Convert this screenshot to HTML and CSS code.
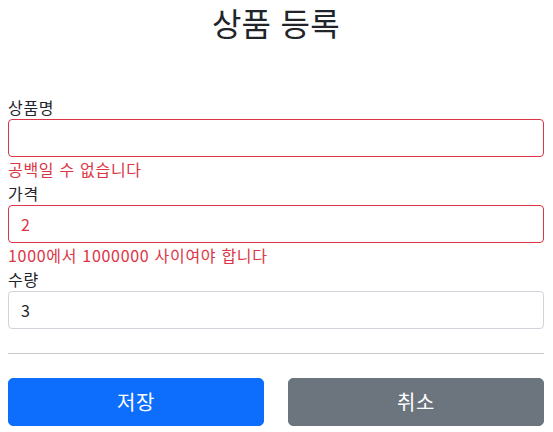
FILE: index.html
```html
<!DOCTYPE html>
<html lang="ko">
<head>
<meta charset="utf-8">
<title>상품 등록</title>
<link rel="stylesheet" href="styles.css">
</head>
<body>
<div class="container">
  <div class="title-block">
    <h2 class="title">상품 등록</h2>
  </div>
  <form class="form">
    <div class="field">
      <label class="label" for="itemName">상품명</label>
      <input class="input is-error" id="itemName" type="text" value="">
      <div class="error">공백일 수 없습니다</div>
    </div>
    <div class="field">
      <label class="label" for="price">가격</label>
      <input class="input is-error" id="price" type="text" value="2">
      <div class="error">1000에서 1000000 사이여야 합니다</div>
    </div>
    <div class="field">
      <label class="label" for="quantity">수량</label>
      <input class="input" id="quantity" type="text" value="3">
    </div>
    <hr class="divider">
    <div class="actions">
      <button class="btn btn-primary" type="button">저장</button>
      <button class="btn btn-secondary" type="button">취소</button>
    </div>
  </form>
</div>
</body>
</html>
```

FILE: styles.css
```css
* { box-sizing: border-box; }

html, body {
  margin: 0;
  padding: 0;
  background: #fff;
}

body {
  font-family: "Noto Sans CJK KR", "Noto Sans", sans-serif;
  font-size: 16px;
  line-height: 1.5;
  color: #212529;
}

.container {
  padding: 0 9px 0 8px;
}

.title-block {
  text-align: center;
  padding-bottom: 50px;
}

.title {
  margin: 0;
  font-size: 32px;
  font-weight: 400;
  line-height: 45px;
  letter-spacing: 0.3px;
}

.form {
  display: flex;
  flex-direction: column;
}

.field {
  display: flex;
  flex-direction: column;
}

.label {
  display: block;
  height: 24px;
  line-height: 24px;
  letter-spacing: 0.7px;
}

.input {
  display: block;
  width: 100%;
  height: 38px;
  padding: 6px 12px;
  font-family: inherit;
  font-size: 16px;
  line-height: 24px;
  color: #212529;
  background: #fff;
  border: 1px solid #ced4da;
  border-radius: 4px;
  outline: none;
}

.input.is-error {
  border-color: #dc3545;
  color: #dc3545;
}

.error {
  height: 24px;
  line-height: 24px;
  color: #dc3545;
  letter-spacing: 0.7px;
}

.divider {
  margin: 24px 0;
  border: 0;
  border-top: 1px solid #c8c9ca;
  height: 0;
}

.actions {
  display: grid;
  grid-template-columns: 1fr 1fr;
  column-gap: 24px;
}

.btn {
  height: 48px;
  padding: 8px 16px;
  font-family: inherit;
  font-size: 20px;
  line-height: 30px;
  color: #fff;
  border: 1px solid transparent;
  border-radius: 5px;
  cursor: pointer;
  letter-spacing: 0.5px;
}

.btn-primary {
  background: #0d6efd;
  border-color: #0d6efd;
}

.btn-secondary {
  background: #6c757d;
  border-color: #6c757d;
}
```
